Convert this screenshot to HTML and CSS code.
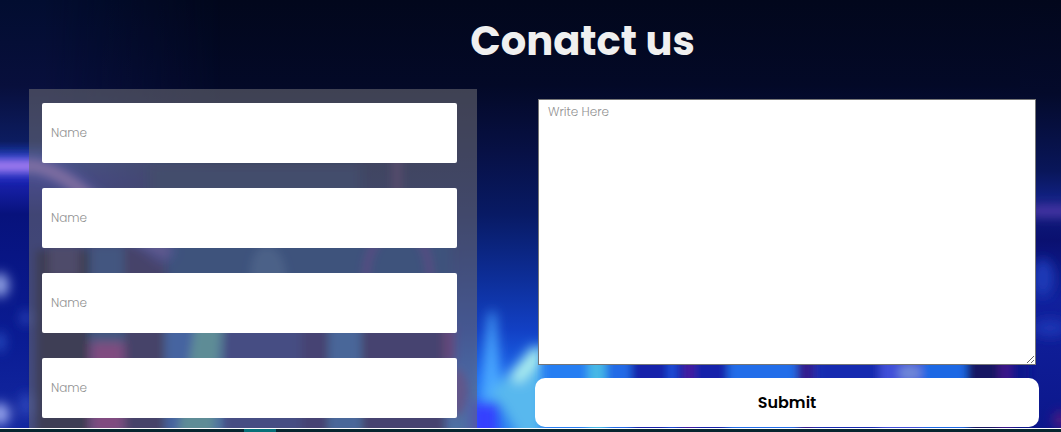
FILE: index.html
```html
<!DOCTYPE html>
<html lang="en">
<head>
<meta charset="utf-8">
<meta name="viewport" content="width=device-width, initial-scale=1">
<title>Contact</title>
<link rel="stylesheet" href="styles.css">
</head>
<body>
<section class="contact">
  <svg class="backdrop" viewBox="0 0 1061 428" preserveAspectRatio="none" aria-hidden="true">
    <defs>
      <linearGradient id="night" x1="0" y1="0" x2="0" y2="1">
        <stop offset="0" stop-color="#02071c"/>
        <stop offset=".2" stop-color="#030927"/>
        <stop offset=".35" stop-color="#071044"/>
        <stop offset=".5" stop-color="#081a64"/>
        <stop offset=".65" stop-color="#0d2e98"/>
        <stop offset=".77" stop-color="#1240c4"/>
        <stop offset=".88" stop-color="#1c66ee"/>
        <stop offset="1" stop-color="#2a80f0"/>
      </linearGradient>
      <linearGradient id="side" x1="0" y1="0" x2="0" y2="1">
        <stop offset="0" stop-color="#020d30"/>
        <stop offset=".2" stop-color="#080f3c"/>
        <stop offset=".33" stop-color="#0c1c60"/>
        <stop offset=".37" stop-color="#1c3cb0"/>
        <stop offset=".42" stop-color="#1a22b0"/>
        <stop offset=".5" stop-color="#07127c"/>
        <stop offset=".8" stop-color="#0a1c94"/>
        <stop offset="1" stop-color="#1428a0"/>
      </linearGradient>
      <linearGradient id="east" x1="0" y1="0" x2="0" y2="1">
        <stop offset="0" stop-color="#02071c"/>
        <stop offset=".22" stop-color="#040a2b"/>
        <stop offset=".4" stop-color="#09165a"/>
        <stop offset=".46" stop-color="#102080"/>
        <stop offset=".56" stop-color="#0a1070"/>
        <stop offset=".7" stop-color="#10209c"/>
        <stop offset="1" stop-color="#0c178c"/>
      </linearGradient>
      <linearGradient id="fade" x1="0" y1="0" x2="1" y2="0">
        <stop offset="0" stop-color="#fff"/>
        <stop offset=".2" stop-color="#fff"/>
        <stop offset="1" stop-color="#000"/>
      </linearGradient>
      <linearGradient id="neon" gradientUnits="userSpaceOnUse" x1="30" y1="0" x2="175" y2="0">
        <stop offset="0" stop-color="#a07af0"/>
        <stop offset=".4" stop-color="#9a70e0"/>
        <stop offset="1" stop-color="#6a50c0" stop-opacity=".5"/>
      </linearGradient>
      <mask id="west"><rect width="220" height="428" fill="url(#fade)"/></mask>
      <filter id="b3" x="-50%" y="-50%" width="200%" height="200%"><feGaussianBlur stdDeviation="4"/></filter>
      <filter id="b6" x="-50%" y="-50%" width="200%" height="200%"><feGaussianBlur stdDeviation="6"/></filter>
    </defs>
    <rect width="1061" height="428" fill="url(#night)"/>
    <rect width="220" height="428" fill="url(#side)" mask="url(#west)"/>
    <rect x="1020" width="41" height="428" fill="url(#east)"/>
    <g filter="url(#b6)">
      <rect x="150" y="165" width="210" height="40" fill="#0a2668"/>
      <rect x="150" y="240" width="300" height="50" fill="#063490"/>
    </g>
    <g filter="url(#b3)">
      <rect x="36" y="250" width="54" height="190" fill="#05022f"/>
      <rect x="50" y="246" width="28" height="30" fill="#2a2264"/>
      <rect x="92" y="246" width="31" height="100" fill="#0d3c98"/>
      <rect x="92" y="344" width="31" height="90" fill="#a52298"/>
      <rect x="124" y="246" width="42" height="190" fill="#140a60"/>
      <rect x="166" y="326" width="32" height="110" fill="#1260e8"/>
      <path d="M196 322H222L214 436H178Z" fill="#51c4d0"/>
      <rect x="223" y="326" width="78" height="110" fill="#1828a0"/>
      <rect x="301" y="326" width="28" height="110" fill="#130f78"/>
      <rect x="331" y="326" width="28" height="110" fill="#1a66d8"/>
      <rect x="361" y="326" width="84" height="110" fill="#180d70"/>
      <rect x="445" y="326" width="10" height="36" fill="#621c90"/>
      <ellipse cx="456" cy="392" rx="12" ry="24" fill="#5a3cb0"/>
      <path d="M250 280Q250 246 268 246Q284 248 287 280Z" fill="#2458ac"/>
      <path d="M366 280Q366 252 380 238M418 238Q430 252 430 280" fill="none" stroke="#4a24a0" stroke-width="7"/>
      <path d="M397 155V195" stroke="#3c2166" stroke-width="10"/>
    </g>
    <g filter="url(#b6)">
      <path d="M-20 166H35Q62 172 90 198L170 258" fill="none" stroke="#2b38cc" stroke-opacity=".7" stroke-width="22"/>
      <ellipse cx="0" cy="285" rx="9" ry="12" fill="#94a5e6"/>
      <ellipse cx="0" cy="414" rx="10" ry="11" fill="#97a5ed"/>
      <ellipse cx="0" cy="342" rx="4" ry="10" fill="#345fd0"/>
      <ellipse cx="26" cy="318" rx="5" ry="7" fill="#304cc0"/>
      <ellipse cx="26" cy="405" rx="6" ry="12" fill="#304cc0"/>
      <rect x="470" y="400" width="28" height="45" fill="#3541ff"/>
      <ellipse cx="1043" cy="278" rx="11" ry="19" fill="#1d3ab8"/>
      <ellipse cx="1050" cy="328" rx="18" ry="9" fill="#1d34b4"/>
      <ellipse cx="1061" cy="420" rx="7" ry="8" fill="#641b7f"/>
      <path d="M1030 211H1071" stroke="#583db0" stroke-width="10"/>
    </g>
    <path d="M-20 166H35Q62 172 90 198Q120 226 170 254" fill="none" stroke="url(#neon)" stroke-width="13" filter="url(#b3)"/>
    <g filter="url(#b6)">
      <path d="M492 312L500 400H482Z" fill="#4aa8ff" stroke="#4aa8ff" stroke-width="5"/>
      <path d="M490 395L532 345L560 352V440H520L500 405Z" fill="#58b8ee"/>
      <path d="M515 380L540 352" stroke="#b4f4ee" stroke-width="11"/>
    </g>
    <g filter="url(#b3)">
      <rect x="541" y="350" width="50" height="90" fill="#267ef2"/>
      <rect x="588" y="350" width="18" height="90" fill="#46b8e6"/>
      <rect x="607" y="350" width="24" height="90" fill="#226be6"/>
      <rect x="631" y="350" width="98" height="90" fill="#1720aa"/>
      <rect x="668" y="350" width="8" height="90" fill="#1d52e0"/>
      <rect x="684" y="350" width="10" height="90" fill="#461c9e"/>
      <rect x="728" y="350" width="68" height="90" fill="#216de9"/>
      <rect x="797" y="350" width="18" height="90" fill="#311d8e"/>
      <rect x="816" y="350" width="70" height="90" fill="#122cb0"/>
      <rect x="880" y="350" width="42" height="90" fill="#4050d8"/>
      <ellipse cx="910" cy="373" rx="12" ry="8" fill="#7088d8"/>
      <rect x="922" y="350" width="44" height="90" fill="#1d68e4"/>
      <rect x="967" y="350" width="32" height="90" fill="#151664"/>
      <rect x="999" y="350" width="12" height="90" fill="#3c158a"/>
      <rect x="1011" y="350" width="18" height="90" fill="#0d168c"/>
    </g>
  </svg>
  <form class="contact-form">
    <h1 class="title">Conatct us</h1>
    <div class="columns">
      <div class="panel">
        <input class="field" type="text" placeholder="Name" aria-label="Name">
        <input class="field" type="text" placeholder="Name" aria-label="Name">
        <input class="field" type="text" placeholder="Name" aria-label="Name">
        <input class="field" type="text" placeholder="Name" aria-label="Name">
      </div>
      <div class="message-column">
        <textarea class="message" placeholder="Write Here" aria-label="Write Here"></textarea>
        <button class="submit" type="submit">Submit</button>
      </div>
    </div>
  </form>
</section>
<footer class="footer"></footer>
</body>
</html>
```

FILE: styles.css
```css
* {
  box-sizing: border-box;
}

body {
  margin: 0;
  background: #06262f;
  font-family: Poppins, Inter, sans-serif;
  overflow-x: hidden;
}

.contact {
  position: relative;
  border-bottom: 1px solid #fff;
}

.backdrop {
  position: absolute;
  inset: 0;
  width: 100%;
  height: 100%;
}

.contact-form {
  position: relative;
  padding: 11px 22px 0 29px;
}

.title {
  margin: 0 0 18px;
  padding-left: 97px;
  color: #f0f0f0;
  font-size: 40px;
  font-weight: 700;
  line-height: 60px;
  text-align: center;
}

.columns {
  display: grid;
  grid-template-columns: 8fr 9fr;
  column-gap: 58px;
}

.panel {
  display: flex;
  flex-direction: column;
  gap: 25px;
  padding: 14px 20px 10px 13px;
  background: rgba(103, 103, 112, 0.6);
}

.field {
  width: 100%;
  height: 60px;
  padding: 0 9px;
  border: 0;
  border-radius: 2px;
  background: #fff;
  font: 300 12px Poppins, Inter, sans-serif;
}

.field::placeholder,
.message::placeholder {
  color: #929292;
  opacity: 1;
}

.message-column {
  display: flex;
  flex-direction: column;
  gap: 13px;
  padding: 10px 0 1px;
}

.message {
  flex: 1;
  margin: 0 3px;
  padding: 3px 9px;
  border: 1px solid #767676;
  background: #fff;
  font: 300 12px/18px Poppins, Inter, sans-serif;
  resize: both;
}

.submit {
  height: 49px;
  border: 0;
  border-radius: 10px;
  background: #fff;
  color: #000;
  font: 600 16px Poppins, Inter, sans-serif;
}

.footer {
  height: 3px;
  background: linear-gradient(90deg, #06262f 23%, #067078 23%, #067078 26%, #06262f 26%);
}
```
